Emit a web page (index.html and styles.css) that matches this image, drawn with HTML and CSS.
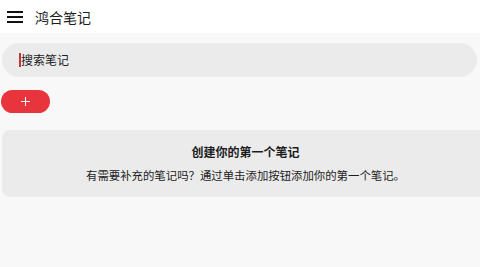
FILE: index.html
```html
<!DOCTYPE html>
<html lang="zh">
<head>
    <meta charset="UTF-8">
    <meta name="viewport" content="width=device-width, initial-scale=1.0">
    <title>鸿合笔记</title>
    <link rel="stylesheet" href="styles.css">
</head>
<body>
    <header class="app-bar">
        <span class="menu-icon">
            <svg width="16" height="12" viewBox="0 0 16 12">
                <rect x="0" y="0" width="16" height="2" fill="#111"/>
                <rect x="0" y="5" width="16" height="2" fill="#111"/>
                <rect x="0" y="10" width="16" height="2" fill="#111"/>
            </svg>
        </span>
        <h1>鸿合笔记</h1>
    </header>

    <main class="content">
        <div class="search-box">
            <span class="caret"></span>
            <span class="placeholder">搜索笔记</span>
        </div>

        <button class="add-btn">
            <svg width="9" height="9" viewBox="0 0 9 9">
                <path d="M4.5 0v9M0 4.5h9" stroke="#fff" stroke-width="1"/>
            </svg>
        </button>

        <div class="empty-card">
            <h2>创建你的第一个笔记</h2>
            <p>有需要补充的笔记吗？通过单击添加按钮添加你的第一个笔记。</p>
        </div>
    </main>
</body>
</html>
```

FILE: styles.css
```css
* {
    margin: 0;
    padding: 0;
    box-sizing: border-box;
    font-family: 'Noto Sans CJK SC', 'Noto Sans', sans-serif;
}

body {
    background: #f8f8f8;
    color: #1c1c1c;
    overflow: hidden;
}

.app-bar {
    height: 33px;
    background: #fff;
    display: flex;
    align-items: center;
    padding-left: 7px;
}

.menu-icon {
    display: flex;
    margin-right: 12px;
}

.app-bar h1 {
    font-size: 14px;
    font-weight: 400;
    color: #1c1c1c;
}

.content {
    padding: 10px 0 0 2px;
}

.search-box {
    width: 475px;
    height: 34px;
    background: #ebebeb;
    border-radius: 17px;
    display: flex;
    align-items: center;
    padding-left: 17px;
}

.caret {
    width: 2px;
    height: 14px;
    background: #c8323a;
    margin-top: -1px;
}

.placeholder {
    font-size: 12px;
    color: #1c1c1c;
    margin-top: -2px;
}

.add-btn {
    display: flex;
    align-items: center;
    justify-content: center;
    width: 49px;
    height: 23px;
    margin-top: 13px;
    margin-left: -1px;
    background: #e8343d;
    border: none;
    border-radius: 12px;
}

.empty-card {
    width: 487px;
    height: 67px;
    margin-top: 17px;
    background: #ebebeb;
    border-radius: 8px;
    text-align: center;
    padding-top: 13px;
}

.empty-card h2 {
    font-size: 12px;
    font-weight: 700;
    line-height: 17px;
}

.empty-card p {
    font-size: 11.4px;
    line-height: 17px;
    margin-top: 7px;
}
```
